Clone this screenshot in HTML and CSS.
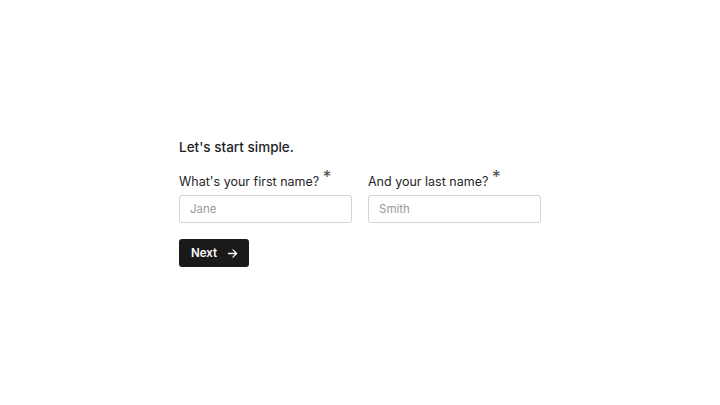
FILE: index.html
```html
<!DOCTYPE html>
<html lang="en">
<head>
  <meta charset="UTF-8" />
  <title>Let's start simple</title>
  <link rel="stylesheet" href="styles.css">
</head>
<body>
  <div class="pagina">
    <form class="formulario">
      <h2 class="titulo">Let's start simple.</h2>
      <div class="campos">
        <label class="campo">
          <span class="rotulo">What's your first name? <span class="obrigatorio">*</span></span>
          <input type="text" placeholder="Jane">
        </label>
        <label class="campo">
          <span class="rotulo">And your last name? <span class="obrigatorio">*</span></span>
          <input type="text" placeholder="Smith">
        </label>
      </div>
      <button type="button" class="proximo">
        Next
        <svg width="11" height="11" viewBox="0 0 12 12" fill="none" stroke="#fff" stroke-width="1.4" stroke-linecap="round" stroke-linejoin="round">
          <path d="M1.5 6h9M6.5 2l4 4-4 4"/>
        </svg>
      </button>
    </form>
  </div>
</body>
</html>
```

FILE: styles.css
```css
* {
  box-sizing: border-box;
}

body {
  margin: 0;
  font-family: Inter, "Noto Sans", sans-serif;
  background-color: #ffffff;
  color: #1f1f1f;
}

.pagina {
  min-height: 100vh;
  display: flex;
  justify-content: center;
  align-items: center;
}

.formulario {
  width: 362px;
}

.titulo {
  margin: 1px 0 16px;
  font-size: 13.5px;
  font-weight: 500;
  line-height: 17px;
}

.campos {
  display: flex;
  gap: 16px;
  margin-bottom: 16px;
}

.campo {
  flex: 1;
  min-width: 0;
  display: flex;
  flex-direction: column;
  gap: 5px;
}

.rotulo {
  font-size: 12.5px;
  line-height: 16px;
  color: #262626;
}

.obrigatorio {
  font-size: 17px;
  position: relative;
  top: -3px;
  color: #4a4a4a;
}

.campo input {
  width: 100%;
  height: 28px;
  border: 1px solid #d4d4d4;
  border-radius: 3px;
  padding: 0 10px;
  font-family: inherit;
  font-size: 11.5px;
  color: #222;
  outline: none;
}

.campo input::placeholder {
  color: #9a9a9a;
}

.proximo {
  display: flex;
  align-items: center;
  gap: 10px;
  height: 28px;
  padding: 0 11px 0 12px;
  border: none;
  border-radius: 3px;
  background-color: #1a1a1a;
  color: #fff;
  font-family: inherit;
  font-size: 11.5px;
  font-weight: 600;
  cursor: pointer;
}
```
